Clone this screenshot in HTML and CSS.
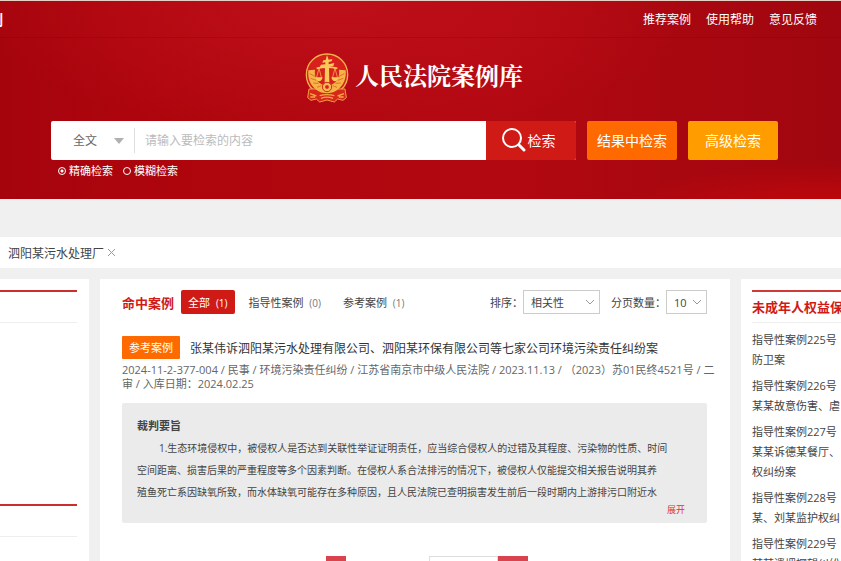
FILE: index.html
```html
<!DOCTYPE html>
<html lang="zh-CN">
<head>
    <meta charset="UTF-8">
    <meta name="viewport" content="width=device-width, initial-scale=1.0">
    <title>人民法院案例库</title>
    <link rel="stylesheet" href="styles.css">
</head>
<body>
    <header class="header">
        <nav class="top-nav">
            <a class="top-left" href="#">案例</a>
            <div class="top-links">
                <a href="#">推荐案例</a>
                <a href="#">使用帮助</a>
                <a href="#">意见反馈</a>
            </div>
        </nav>

        <div class="brand">
            <svg class="emblem" viewBox="0 0 132 150" aria-hidden="true">
                <circle cx="66" cy="65" r="62" fill="#d8201c" stroke="#f3b44a" stroke-width="4"/>
                <path d="M12 108 L120 108 L124 134 L114 142 L98 138 L88 147 L66 141 L44 147 L34 138 L18 142 L8 134 Z" fill="#d8281a" stroke="#f0a040" stroke-width="3"/>
                <path d="M10 52 C6 92 32 120 66 121 C100 120 126 92 122 52 L102 50 C106 78 90 96 66 98 C42 96 26 78 30 50 Z" fill="#f5b448"/>
                <path d="M14 62 L30 70 M17 76 L34 82 M25 90 L41 91 M36 103 L49 98 M118 62 L102 70 M115 76 L98 82 M107 90 L91 91 M96 103 L83 98" stroke="#d8501c" stroke-width="2"/>
                <path d="M66 6 L71 20 L82 18 L80 25 L71 27 L71 34 L88 30 L85 39 L72 41 L73 88 L59 88 L60 41 L44 43 L48 35 L61 34 L61 28 L52 29 L55 22 L62 21 Z" fill="#f8cb58"/>
                <path d="M35 46 Q66 39 97 46" fill="none" stroke="#f8cb58" stroke-width="5"/>
                <path d="M42 46 L34 76 L50 76 Z M90 46 L82 76 L98 76 Z" fill="none" stroke="#f8cb58" stroke-width="2"/>
                <path d="M31 73 H53 Q50 85 42 85 Q34 85 31 73 Z M79 73 H101 Q98 85 90 85 Q82 85 79 73 Z" fill="#f8cb58"/>
                <circle cx="66" cy="102" r="14" fill="#f5b94a" stroke="#d0301a" stroke-width="3"/>
                <circle cx="66" cy="102" r="7" fill="#d8201c" stroke="#f8d070" stroke-width="2"/>
                <path d="M15 122 L34 129 M98 129 L117 122 M16 132 L30 132 M102 132 L116 132 M44 128 Q66 122 88 128 M48 136 Q66 129 84 136" fill="none" stroke="#f5a845" stroke-width="4"/>
            </svg>
            <h1>人民法院案例库</h1>
        </div>

        <form class="search">
            <div class="search-row">
                <div class="search-box">
                    <span class="select scope">
                        <select aria-label="检索范围"><option>全文</option></select>
                        <svg width="10" height="6" viewBox="0 0 10 6" aria-hidden="true"><path d="M0 0H10L5 6Z" fill="#b0b0b0"/></svg>
                    </span>
                    <input class="keyword" type="text" aria-label="检索内容" placeholder="请输入要检索的内容">
                    <button class="btn btn-search" type="button">
                        <svg width="24" height="24" viewBox="0 0 24 24" aria-hidden="true"><circle cx="10" cy="10" r="9" fill="none" stroke="#fff" stroke-width="2"/><path d="M17 17L22 22" stroke="#fff" stroke-width="3" stroke-linecap="round"/></svg>
                        检索
                    </button>
                </div>
                <button class="btn btn-within" type="button">结果中检索</button>
                <button class="btn btn-advanced" type="button">高级检索</button>
            </div>
            <div class="modes">
                <label><input type="radio" name="mode" checked>精确检索</label>
                <label><input type="radio" name="mode">模糊检索</label>
            </div>
        </form>
    </header>

    <div class="conditions">
        <span>泗阳某污水处理厂</span>
        <button class="remove" type="button" aria-label="移除条件">
            <svg width="7" height="7" viewBox="0 0 7 7" aria-hidden="true"><path d="M0 0L7 7M7 0L0 7" stroke="#999"/></svg>
        </button>
    </div>

    <div class="columns">
        <aside class="card filters">
            <div class="filter"></div>
            <div class="filter"></div>
        </aside>

        <main class="card results">
            <div class="toolbar">
                <h2>命中案例</h2>
                <div class="tabs">
                    <button class="tab active" type="button">全部 <small>(1)</small></button>
                    <button class="tab" type="button">指导性案例 <small>(0)</small></button>
                    <button class="tab" type="button">参考案例 <small>(1)</small></button>
                </div>
                <label class="option">排序：
                    <span class="select boxed sort">
                        <select><option>相关性</option></select>
                        <svg width="8" height="5" viewBox="0 0 8 5" aria-hidden="true"><path d="M0 0L4 4L8 0" fill="none" stroke="#999"/></svg>
                    </span>
                </label>
                <label class="option">分页数量：
                    <span class="select boxed size">
                        <select><option>10</option></select>
                        <svg width="8" height="5" viewBox="0 0 8 5" aria-hidden="true"><path d="M0 0L4 4L8 0" fill="none" stroke="#999"/></svg>
                    </span>
                </label>
            </div>

            <article>
                <div class="case-title">
                    <span class="badge">参考案例</span>
                    <a href="#">张某伟诉泗阳某污水处理有限公司、泗阳某环保有限公司等七家公司环境污染责任纠纷案</a>
                </div>
                <p class="meta">2024-11-2-377-004 / 民事 / 环境污染责任纠纷 / 江苏省南京市中级人民法院 / 2023.11.13 / （2023）苏01民终4521号 / 二<br>审 / 入库日期：2024.02.25</p>
                <div class="summary">
                    <h3>裁判要旨</h3>
                    <p>1.生态环境侵权中，被侵权人是否达到关联性举证证明责任，应当综合侵权人的过错及其程度、污染物的性质、时间<br>空间距离、损害后果的严重程度等多个因素判断。在侵权人系合法排污的情况下，被侵权人仅能提交相关报告说明其养<br>殖鱼死亡系因缺氧所致，而水体缺氧可能存在多种原因，且人民法院已查明损害发生前后一段时期内上游排污口附近水</p>
                    <a class="expand" href="#">展开</a>
                </div>
            </article>

            <div class="pager">
                <button class="page-current" type="button" aria-label="当前页"></button>
                <div class="jump">
                    <input type="text" aria-label="页码">
                    <button type="button" aria-label="跳转"></button>
                </div>
            </div>
        </main>

        <aside class="card topics">
            <h2>未成年人权益保</h2>
            <ul>
                <li><a href="#">指导性案例225号<br>防卫案</a></li>
                <li><a href="#">指导性案例226号<br>某某故意伤害、虐</a></li>
                <li><a href="#">指导性案例227号<br>某某诉德某餐厅、<br>权纠纷案</a></li>
                <li><a href="#">指导性案例228号<br>某、刘某监护权纠</a></li>
                <li><a href="#">指导性案例229号<br>某某遗埋探望纠纷</a></li>
            </ul>
        </aside>
    </div>
</body>
</html>
```

FILE: styles.css
```css
* {
    box-sizing: border-box;
}
body {
    margin: 0;
    height: 100vh;
    overflow: hidden;
    font-family: "Open Sans", "Noto Sans CJK SC", sans-serif;
    font-size: 11px;
    color: #444;
    background-color: #f0f0f0;
}
h1, h2, h3, p, ul {
    margin: 0;
    padding: 0;
}
ul {
    list-style: none;
}
a {
    color: inherit;
    text-decoration: none;
}
button, input, select {
    font: inherit;
    color: inherit;
    margin: 0;
    padding: 0;
    border: 0;
    border-radius: 0;
    background: none;
}
svg {
    display: block;
}

.header {
    height: 199px;
    border-top: 1px solid #e8cfc4;
    color: #fff;
    background:
        radial-gradient(ellipse at 100% 112%, #cc080a 0, rgba(204, 8, 10, 0) 20%),
        radial-gradient(ellipse at 40% 0, #be0f1a 0, rgba(190, 15, 26, 0) 50%),
        linear-gradient(90deg, #a6040d 0, #ae050d 20%, #b20811 60%, #a0060f 100%);
}
.top-nav {
    display: flex;
    justify-content: space-between;
    align-items: center;
    height: 37px;
    padding-right: 24px;
    border-bottom: 1px solid rgba(120, 0, 10, 0.25);
    font-size: 12px;
}
.top-left {
    margin-left: -25px;
    font-size: 14px;
    font-weight: bold;
}
.top-links {
    display: flex;
    gap: 15px;
}
.brand {
    display: flex;
    justify-content: center;
    gap: 6px;
    height: 83px;
    padding: 15px 13px 0 0;
}
.emblem {
    width: 44px;
    height: 50px;
}
.brand h1 {
    font-family: "Noto Serif CJK SC", "Noto Sans CJK SC", serif;
    font-size: 24px;
    line-height: 44px;
}
.search {
    padding: 0 63px 0 51px;
}
.search-row {
    display: flex;
    gap: 11px;
    height: 39px;
}
.search-box {
    display: flex;
    flex: 1;
    background-color: #fff;
    border-radius: 2px;
    font-size: 12px;
    color: #666;
}
.select {
    display: inline-grid;
    align-items: center;
}
.select select, .select svg {
    grid-area: 1 / 1;
}
.select select {
    appearance: none;
    width: 100%;
    height: 100%;
}
.select svg {
    justify-self: end;
    pointer-events: none;
}
.scope {
    width: 84px;
    height: 25px;
    margin: 7px 0;
    border-right: 1px solid #ddd;
}
.scope select {
    padding-left: 22px;
}
.scope svg {
    margin-right: 10px;
}
.keyword {
    flex: 1;
    min-width: 0;
    padding-left: 10px;
}
.keyword::placeholder {
    color: #bbb;
}
.btn {
    display: flex;
    justify-content: center;
    align-items: center;
    width: 90px;
    padding-bottom: 2px;
    border-radius: 2px;
    font-size: 14px;
    color: #fff;
}
.btn-search {
    gap: 2px;
    padding-right: 5px;
    background-color: #cf1a16;
    border-radius: 0 2px 2px 0;
}
.btn-within {
    background-color: #ff6a00;
}
.btn-advanced {
    background-color: #ff9c00;
}
.modes {
    display: flex;
    gap: 10px;
    padding: 3px 0 0 7px;
    line-height: 16px;
}
.modes label {
    display: flex;
    align-items: center;
    gap: 3px;
}
.modes input {
    appearance: none;
    width: 8px;
    height: 8px;
    border: 1px solid #fff;
    border-radius: 50%;
}
.modes input:checked {
    background: radial-gradient(circle, #fff 0, #fff 1px, transparent 2px);
}

.conditions {
    display: flex;
    align-items: center;
    gap: 4px;
    height: 31px;
    margin: 38px 0 11px;
    padding-left: 8px;
    background-color: #fff;
    font-size: 12px;
}

.columns {
    display: flex;
    align-items: stretch;
    gap: 11px;
}
.card {
    background-color: #fff;
}
.filters {
    width: 89px;
    padding: 11px 12px 0 0;
}
.filter {
    height: 214px;
    border-top: 2px solid #c9302c;
}
.filter::before {
    content: "";
    display: block;
    height: 30px;
    border-bottom: 1px solid #eee;
}
.results {
    flex: 1;
    min-width: 0;
    padding: 11px 23px 0 22px;
}
.toolbar {
    display: flex;
    align-items: center;
    height: 24px;
}
.toolbar h2, .topics h2 {
    font-size: 13px;
    color: #cf1a16;
}
.tabs {
    display: flex;
    flex: 1;
    gap: 6px;
    margin-left: 7px;
}
.tab {
    height: 24px;
    padding: 0 8px;
}
.tab small {
    margin-left: 3px;
    font-size: 10px;
    color: #777;
}
.tab.active {
    padding: 0 7px;
    background-color: #cf1a16;
    border-radius: 2px;
    color: #fff;
}
.tab.active small {
    color: #fff;
}
.option {
    display: flex;
    align-items: center;
    margin-left: 11px;
}
.boxed {
    height: 24px;
    border: 1px solid #ccc;
}
.boxed select {
    padding-left: 7px;
}
.boxed svg {
    margin-right: 5px;
}
.sort {
    width: 77px;
}
.size {
    width: 41px;
}
.case-title {
    display: flex;
    align-items: center;
    gap: 10px;
    margin-top: 22px;
    font-size: 12px;
    color: #333;
    white-space: nowrap;
}
.badge {
    padding: 0 7px;
    background-color: #ff6a00;
    border-radius: 1px;
    font-size: 11px;
    line-height: 23px;
    color: #fff;
}
.meta {
    margin-top: 4px;
    line-height: 14px;
    color: #666;
    white-space: nowrap;
}
.summary {
    display: flex;
    flex-direction: column;
    height: 120px;
    margin-top: 12px;
    padding: 12px 15px 0;
    background-color: #ebebeb;
    border-radius: 2px;
    font-size: 10px;
    line-height: 22px;
    white-space: nowrap;
}
.summary h3 {
    font-size: 11px;
}
.summary p {
    text-indent: 22px;
}
.expand {
    align-self: flex-end;
    margin-right: 7px;
    font-size: 9px;
    line-height: 14px;
    color: #e0303c;
}
.pager {
    display: flex;
    justify-content: center;
    gap: 83px;
    height: 60px;
    padding: 33px 0 0 25px;
}
.page-current {
    width: 20px;
    height: 20px;
    background-color: #d9434e;
}
.jump {
    display: flex;
    height: 20px;
}
.jump input {
    width: 69px;
    border: 1px solid #ddd;
}
.jump button {
    width: 30px;
    background-color: #d9434e;
}

.topics {
    width: 100px;
    padding: 11px 0 0 11px;
    overflow: hidden;
    white-space: nowrap;
}
.topics h2 {
    height: 33px;
    border-top: 2px solid #cf3a36;
    border-bottom: 1px solid #eee;
    line-height: 30px;
}
.topics ul {
    padding-top: 7px;
}
.topics li {
    margin-bottom: 6px;
    line-height: 20px;
}
```
